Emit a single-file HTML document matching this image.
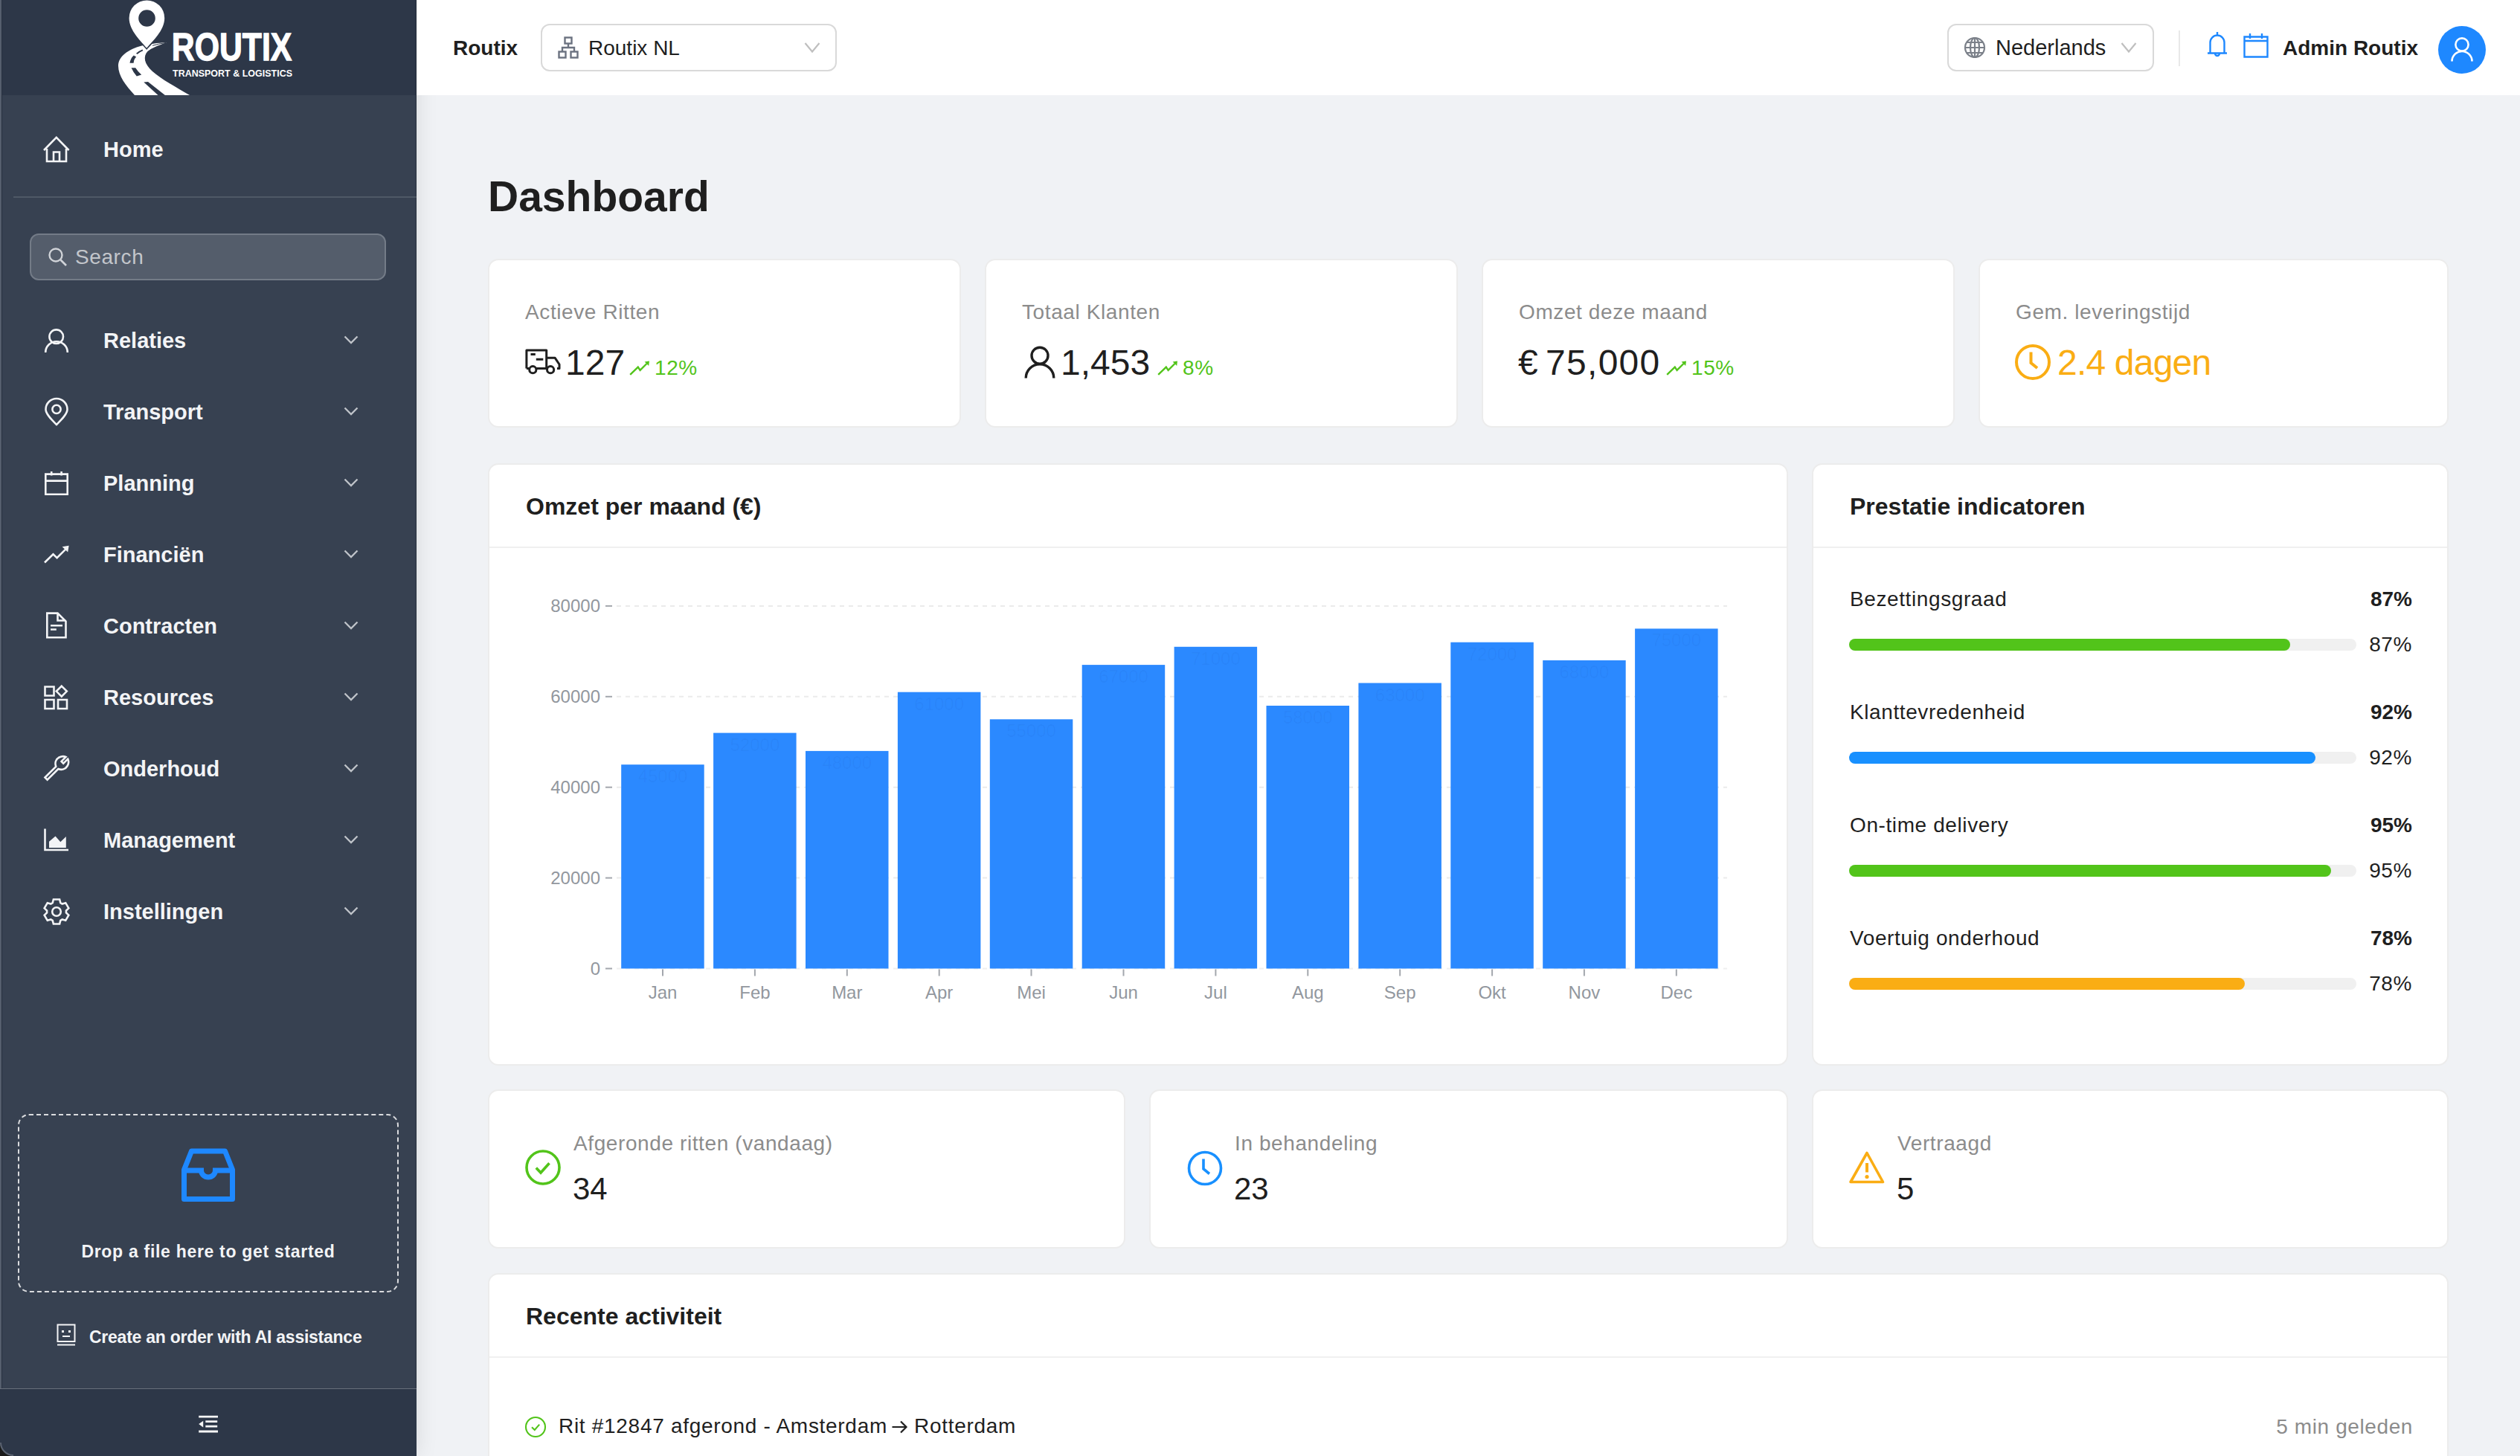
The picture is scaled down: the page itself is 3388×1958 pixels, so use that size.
<!DOCTYPE html><html><head><meta charset="utf-8"><style>
*{box-sizing:border-box;margin:0;padding:0}
html,body{width:3388px;height:1958px;overflow:hidden;background:#f0f2f5;font-family:"Liberation Sans",sans-serif;color:#1f1f1f}
.t{position:absolute;white-space:nowrap;line-height:1}
.a{position:absolute}
.card{position:absolute;background:#fff;border:2px solid #ececec;border-radius:14px}
svg{position:absolute;overflow:visible}
@media (max-width:2400px){html{zoom:0.5}}
</style></head><body>
<div class="a" style="left:560px;top:0;width:2828px;height:128px;background:#fff"></div>
<div class="a" style="left:0;top:0;width:560px;height:1958px;background:#374151;box-shadow:0 0 28px rgba(0,0,0,0.11)"></div>
<div class="a" style="left:0;top:0;width:560px;height:128px;background:#2d3748"></div>
<div class="a" style="left:559px;top:0;width:1px;height:1958px;background:rgba(15,20,30,0.35)"></div>
<div class="a" style="left:560px;top:0;width:2828px;height:128px;background:#fff"></div>
<div class="a" style="left:0;top:0;width:2px;height:1958px;background:#555e6d"></div><div class="a" style="left:2px;top:0;width:1px;height:1958px;background:#283140"></div>
<svg style="left:150px;top:0;overflow:hidden" width="260" height="128" viewBox="0 0 260 128">
<path fill="#fff" d="M40.5,61.5 C22,66.5 9,76 9,88.5 C9,102 19,115 31,128 L105,128 C88,118 66,106 55,96 C44,86 42,76 48.5,69 C54,64.5 62,61.5 74,57 C62,57.5 50,59.5 40.5,61.5 Z"/>
<path fill="#2d3748" d="M33,71.8 Q36.5,68.6 41.5,66.6 L42.2,68.2 Q37.6,70 34.5,73 Z"/>
<path fill="#2d3748" d="M24.5,84.8 Q25.5,78.5 29.8,74.6 L33.2,76.6 Q29.8,80 29.6,84.8 Z"/>
<path fill="#2d3748" d="M26.6,91.3 L32.2,91.3 Q35.5,96.5 40.2,100.6 L33.8,102.4 Q29.2,97.5 26.6,91.3 Z"/>
<path fill="#2d3748" d="M43.3,110.6 L49,110 L72.5,128.5 L63,128.5 Z"/>
<path fill="none" stroke="#2d3748" stroke-width="1" d="M55,61.3 Q63,59 73,57.4"/>
<path fill="#2d3748" stroke="#2d3748" stroke-width="3.2" d="M47.2,64.5 C40,56 23.6,41 23.6,24.2 A23.8,23.8 0 0 1 71.2,24.2 C71.2,41 54.5,56 47.2,64.5 Z"/>
<path fill="#fff" fill-rule="evenodd" d="M47.2,64.5 C40,56 23.6,41 23.6,24.2 A23.8,23.8 0 0 1 71.2,24.2 C71.2,41 54.5,56 47.2,64.5 Z M47.5,13.2 A11.3,11.3 0 1 0 47.5,35.8 A11.3,11.3 0 1 0 47.5,13.2 Z"/>
<text x="80.8" y="81.2" font-family="Liberation Sans" font-weight="700" font-size="52" fill="#fff" stroke="#fff" stroke-width="1.3" textLength="161.5" lengthAdjust="spacingAndGlyphs">ROUTIX</text>
<text x="82" y="102.7" font-family="Liberation Sans" font-weight="700" font-size="13.4" fill="#fff" textLength="161" lengthAdjust="spacingAndGlyphs">TRANSPORT &amp; LOGISTICS</text>
</svg>
<svg style="left:58px;top:183px" width="36" height="36" viewBox="0 0 36 36"><path fill="none" stroke="#f3f4f6" stroke-width="2.6" stroke-linejoin="miter" d="M1,19 L17.8,1.8 L34.6,19 M5,17 V34 H31 V17 M14,34 V21.5 H22 V34"/></svg>
<div class="t" style="left:139.0px;top:186.5px;font-size:29px;color:#f3f4f6;font-weight:700;">Home</div>
<div class="a" style="left:18px;top:264px;width:542px;height:2px;background:rgba(255,255,255,0.12)"></div>
<div class="a" style="left:40px;top:314px;width:479px;height:63px;border-radius:12px;background:#545d6b;border:2px solid #737b87"></div>
<svg style="left:64px;top:332px" width="28" height="28" viewBox="0 0 28 28"><circle cx="11" cy="11" r="8.5" fill="none" stroke="#d0d3d8" stroke-width="2.4"/><path d="M17.5,17.5 L25,25" stroke="#d0d3d8" stroke-width="2.6"/></svg>
<div class="t" style="left:101.0px;top:332.3px;font-size:28px;color:#c3c6cb;font-weight:400;letter-spacing:0.6px;">Search</div>
<svg style="left:58px;top:439px" width="36" height="36" viewBox="0 0 36 36"><circle fill="none" stroke="#f3f4f6" stroke-width="2.6" stroke-linejoin="miter" cx="17.7" cy="13.7" r="9.3"/><path fill="none" stroke="#f3f4f6" stroke-width="2.6" stroke-linejoin="miter" d="M3.2,35 A14.8,14.8 0 0 1 32.8,35"/></svg>
<div class="t" style="left:139.0px;top:443.5px;font-size:29px;color:#f3f4f6;font-weight:700;">Relaties</div>
<svg style="left:462px;top:451px" width="20" height="12" viewBox="0 0 20 12"><path fill="none" stroke="#bfc3c9" stroke-width="2.3" d="M1.5,1.5 L10,10 L18.5,1.5"/></svg>
<svg style="left:58px;top:535px" width="36" height="36" viewBox="0 0 36 36"><path fill="none" stroke="#f3f4f6" stroke-width="2.6" stroke-linejoin="miter" d="M18,36 C12,30 3.5,22 3.5,15.5 A14.5,14.5 0 0 1 32.5,15.5 C32.5,22 24,30 18,36 Z"/><circle fill="none" stroke="#f3f4f6" stroke-width="2.6" stroke-linejoin="miter" cx="18" cy="15.4" r="5.6"/></svg>
<div class="t" style="left:139.0px;top:539.5px;font-size:29px;color:#f3f4f6;font-weight:700;">Transport</div>
<svg style="left:462px;top:547px" width="20" height="12" viewBox="0 0 20 12"><path fill="none" stroke="#bfc3c9" stroke-width="2.3" d="M1.5,1.5 L10,10 L18.5,1.5"/></svg>
<svg style="left:58px;top:631px" width="36" height="36" viewBox="0 0 36 36"><path fill="none" stroke="#f3f4f6" stroke-width="2.6" stroke-linejoin="miter" d="M3.3,6.6 H32.7 V33.7 H3.3 Z M3.3,15.6 H32.7 M11.2,3 V8.5 M24.6,3 V8.5"/></svg>
<div class="t" style="left:139.0px;top:635.5px;font-size:29px;color:#f3f4f6;font-weight:700;">Planning</div>
<svg style="left:462px;top:643px" width="20" height="12" viewBox="0 0 20 12"><path fill="none" stroke="#bfc3c9" stroke-width="2.3" d="M1.5,1.5 L10,10 L18.5,1.5"/></svg>
<svg style="left:58px;top:727px" width="36" height="36" viewBox="0 0 36 36"><path fill="none" stroke="#f3f4f6" stroke-width="2.6" stroke-linejoin="miter" d="M2,29.5 L13.5,18.3 L18.6,23.1 L31,10.8"/><path fill="#f3f4f6" d="M34.6,6.8 L25.6,8.2 L33.2,15.6 Z"/></svg>
<div class="t" style="left:139.0px;top:731.5px;font-size:29px;color:#f3f4f6;font-weight:700;">Financiën</div>
<svg style="left:462px;top:739px" width="20" height="12" viewBox="0 0 20 12"><path fill="none" stroke="#bfc3c9" stroke-width="2.3" d="M1.5,1.5 L10,10 L18.5,1.5"/></svg>
<svg style="left:58px;top:823px" width="36" height="36" viewBox="0 0 36 36"><path fill="none" stroke="#f3f4f6" stroke-width="2.6" stroke-linejoin="miter" d="M5.3,1.6 H19.5 L30.5,12.6 V34.2 H5.3 Z M19.5,1.6 V11.5 H30.5 M10,18.3 H26 M10,23.5 H17.8"/></svg>
<div class="t" style="left:139.0px;top:827.5px;font-size:29px;color:#f3f4f6;font-weight:700;">Contracten</div>
<svg style="left:462px;top:835px" width="20" height="12" viewBox="0 0 20 12"><path fill="none" stroke="#bfc3c9" stroke-width="2.3" d="M1.5,1.5 L10,10 L18.5,1.5"/></svg>
<svg style="left:58px;top:919px" width="36" height="36" viewBox="0 0 36 36"><path fill="none" stroke="#f3f4f6" stroke-width="2.6" stroke-linejoin="miter" d="M2.5,4.5 H14.5 V16.5 H2.5 Z M2.5,22 H14.5 V34 H2.5 Z M20,22 H32 V34 H20 Z M24.8,3.6 L31.8,10.6 L24.8,17.6 L17.8,10.6 Z"/></svg>
<div class="t" style="left:139.0px;top:923.5px;font-size:29px;color:#f3f4f6;font-weight:700;">Resources</div>
<svg style="left:462px;top:931px" width="20" height="12" viewBox="0 0 20 12"><path fill="none" stroke="#bfc3c9" stroke-width="2.3" d="M1.5,1.5 L10,10 L18.5,1.5"/></svg>
<svg style="left:58px;top:1015px" width="36" height="36" viewBox="0 0 36 36"><path fill="none" stroke="#f3f4f6" stroke-width="2.6" stroke-linejoin="miter" d="M2.5,30.5 L17.2,15.8 C15.5,11 17,6 21.5,3.5 C24.5,2 28,1.8 30.5,3 L24.6,8.9 L27.2,11.6 L33.2,5.6 C34.6,8.5 34.4,12 32.6,15 C30.2,19.3 25,21 20.3,19 L5.6,33.7 Z"/></svg>
<div class="t" style="left:139.0px;top:1019.5px;font-size:29px;color:#f3f4f6;font-weight:700;">Onderhoud</div>
<svg style="left:462px;top:1027px" width="20" height="12" viewBox="0 0 20 12"><path fill="none" stroke="#bfc3c9" stroke-width="2.3" d="M1.5,1.5 L10,10 L18.5,1.5"/></svg>
<svg style="left:58px;top:1111px" width="36" height="36" viewBox="0 0 36 36"><path fill="none" stroke="#f3f4f6" stroke-width="2.6" d="M2.5,3.5 V32 H34"/><path fill="#f3f4f6" d="M8,29 V20.8 L16.5,13.6 L23.3,21.2 L30.8,14 V29 Z"/></svg>
<div class="t" style="left:139.0px;top:1115.5px;font-size:29px;color:#f3f4f6;font-weight:700;">Management</div>
<svg style="left:462px;top:1123px" width="20" height="12" viewBox="0 0 20 12"><path fill="none" stroke="#bfc3c9" stroke-width="2.3" d="M1.5,1.5 L10,10 L18.5,1.5"/></svg>
<svg style="left:58px;top:1207px" width="36" height="36" viewBox="0 0 36 36"><path fill="none" stroke="#f3f4f6" stroke-width="2.6" stroke-linejoin="miter" stroke-linejoin="round" d="M12.71,7.12 L13.89,2.50 L22.11,2.50 L23.29,7.12 L25.64,8.48 L30.23,7.19 L34.34,14.31 L30.93,17.64 L30.93,20.36 L34.34,23.69 L30.23,30.81 L25.64,29.52 L23.29,30.88 L22.11,35.50 L13.89,35.50 L12.71,30.88 L10.36,29.52 L5.77,30.81 L1.66,23.69 L5.07,20.36 L5.07,17.64 L1.66,14.31 L5.77,7.19 L10.36,8.48 Z"/><circle fill="none" stroke="#f3f4f6" stroke-width="2.6" stroke-linejoin="miter" cx="18" cy="19" r="5.8"/></svg>
<div class="t" style="left:139.0px;top:1211.5px;font-size:29px;color:#f3f4f6;font-weight:700;">Instellingen</div>
<svg style="left:462px;top:1219px" width="20" height="12" viewBox="0 0 20 12"><path fill="none" stroke="#bfc3c9" stroke-width="2.3" d="M1.5,1.5 L10,10 L18.5,1.5"/></svg>
<div class="a" style="left:24px;top:1498px;width:512px;height:240px;border:2.5px dashed rgba(255,255,255,0.82);border-radius:15px"></div>
<svg style="left:244px;top:1543px" width="72" height="73" viewBox="0 0 72 73">
<path fill="none" stroke="#1e88ff" stroke-width="7" stroke-linejoin="round" d="M3.5,30 L13.5,5 H58.5 L68.5,30 V69.5 H3.5 Z"/>
<path fill="none" stroke="#1e88ff" stroke-width="7" d="M3.5,31 H26.5 A9.5,9 0 0 0 45.5,31 H68.5"/>
</svg>
<div class="t" style="left:-720.0px;width:2000px;text-align:center;top:1671.5px;font-size:23px;color:#f3f4f6;font-weight:700;letter-spacing:0.7px;">Drop a file here to get started</div>
<svg style="left:76px;top:1780px" width="26" height="30" viewBox="0 0 26 30">
<path fill="none" stroke="#f3f4f6" stroke-width="2" d="M1.5,1.5 H24.5 V24 H1.5 Z M1,28.5 H25"/>
<rect x="7" y="9" width="3" height="3" fill="#f3f4f6"/><rect x="16" y="9" width="3" height="3" fill="#f3f4f6"/><path d="M8,17 H18" stroke="#f3f4f6" stroke-width="2"/>
</svg>
<div class="t" style="left:120.0px;top:1786.5px;font-size:23px;color:#f3f4f6;font-weight:700;letter-spacing:-0.25px;">Create an order with AI assistance</div>
<div class="a" style="left:0;top:1867px;width:560px;height:91px;background:#2d3748;border-top:1px solid rgba(255,255,255,0.28)"></div>
<svg style="left:266px;top:1903px" width="28" height="24" viewBox="0 0 28 24">
<path d="M1.2,2.2 H27 M10.3,8.6 H26.2 M10.3,15.2 H26.2 M1.2,22 H27" stroke="#f6f6f6" stroke-width="2.8"/><path d="M1.2,12 L7.2,7.8 V16.4 Z" fill="#f6f6f6"/>
</svg>
<div class="t" style="left:609.0px;top:50.6px;font-size:28px;color:#1f1f1f;font-weight:700;">Routix</div>
<div class="a" style="left:727px;top:32px;width:398px;height:64px;border:2px solid #d9d9d9;border-radius:12px;background:#fff"></div>
<svg style="left:750px;top:49px" width="28" height="30" viewBox="0 0 28 30">
<g fill="none" stroke="#6b7280" stroke-width="2.4"><rect x="9.5" y="1.5" width="9" height="8"/><rect x="1.5" y="20.5" width="9" height="8"/><rect x="17.5" y="20.5" width="9" height="8"/><path d="M14,9.5 V15 M6,20.5 V15 H22 V20.5"/></g>
</svg>
<div class="t" style="left:791.0px;top:50.8px;font-size:28px;color:#1f1f1f;font-weight:400;letter-spacing:0;">Routix NL</div>
<svg style="left:1081px;top:56px" width="22" height="16" viewBox="0 0 22 16"><path fill="none" stroke="#bfbfbf" stroke-width="2.2" d="M1.5,2 L11,13.5 L20.5,2"/></svg>
<div class="a" style="left:2618px;top:32px;width:278px;height:64px;border:2px solid #d9d9d9;border-radius:12px;background:#fff"></div>
<svg style="left:2640px;top:49px" width="30" height="30" viewBox="0 0 30 30">
<g fill="none" stroke="#7b8089" stroke-width="2.2"><circle cx="15" cy="15" r="13"/><ellipse cx="15" cy="15" rx="6" ry="13"/><path d="M2,15 H28 M4,8 H26 M4,22 H26 M15,2 V28"/></g>
</svg>
<div class="t" style="left:2683.0px;top:50.0px;font-size:29px;color:#1f1f1f;font-weight:400;letter-spacing:0;">Nederlands</div>
<svg style="left:2851px;top:56px" width="22" height="16" viewBox="0 0 22 16"><path fill="none" stroke="#bfbfbf" stroke-width="2.2" d="M1.5,2 L11,13.5 L20.5,2"/></svg>
<div class="a" style="left:2929px;top:41px;width:2px;height:48px;background:#e8e8e8"></div>
<svg style="left:2967px;top:42px" width="28" height="36" viewBox="0 0 28 36">
<g fill="none" stroke="#1e88ff" stroke-width="2.4"><path d="M1,29.5 H27 M4.5,29.5 V15 A9.5,9.5 0 0 1 23.5,15 V29.5 M14,1 V5.5 M11,30 A3,3 0 0 0 17,30"/></g>
</svg>
<svg style="left:3016px;top:44px" width="34" height="34" viewBox="0 0 34 34">
<g fill="none" stroke="#1e88ff" stroke-width="2.4"><path d="M1.5,5.5 H32.5 V32.5 H1.5 Z M1.5,11 H32.5 M9,1 V8 M25,1 V8"/></g>
</svg>
<div class="t" style="left:3069.0px;top:50.7px;font-size:28px;color:#1f1f1f;font-weight:700;">Admin Routix</div>
<div class="a" style="left:3278px;top:35px;width:64px;height:64px;border-radius:32px;background:#1e88ff"></div>
<svg style="left:3294px;top:49px" width="32" height="36" viewBox="0 0 32 36">
<g fill="none" stroke="#fff" stroke-width="2.6"><circle cx="16" cy="11" r="8.6"/><path d="M2.5,33.5 A13.5,13.5 0 0 1 29.5,33.5"/></g>
</svg>
<div class="t" style="left:656.0px;top:235.5px;font-size:57px;color:#1f1f1f;font-weight:700;">Dashboard</div>
<div class="card" style="left:656px;top:348px;width:636px;height:227px"></div>
<div class="card" style="left:1324px;top:348px;width:636px;height:227px"></div>
<div class="card" style="left:1992px;top:348px;width:636px;height:227px"></div>
<div class="card" style="left:2660px;top:348px;width:632px;height:227px"></div>
<div class="t" style="left:706.0px;top:406.3px;font-size:28px;color:#8c8c8c;font-weight:400;letter-spacing:0.6px;">Actieve Ritten</div>
<div class="t" style="left:1374.0px;top:406.3px;font-size:28px;color:#8c8c8c;font-weight:400;letter-spacing:0.6px;">Totaal Klanten</div>
<div class="t" style="left:2042.0px;top:406.3px;font-size:28px;color:#8c8c8c;font-weight:400;letter-spacing:0.6px;">Omzet deze maand</div>
<div class="t" style="left:2710.0px;top:406.3px;font-size:28px;color:#8c8c8c;font-weight:400;letter-spacing:0.6px;">Gem. leveringstijd</div>
<svg style="left:706px;top:469px" width="48" height="36" viewBox="0 0 48 36">
<g fill="none" stroke="#1f1f1f" stroke-width="3" stroke-linejoin="round"><path d="M1.9,26.5 V1.9 H28.7 V26.5 M28.7,12.3 H40.2 L46,21 V26.5 H43 M15,26.5 H29.5 M1.9,26.5 H5"/><circle cx="10.3" cy="28.2" r="4.6"/><circle cx="34.1" cy="28.2" r="4.6"/><path d="M7.5,7.6 H13.8 M14.8,14.2 H24.3"/></g>
</svg>
<div class="t" style="left:760.0px;top:464.4px;font-size:48px;color:#1f1f1f;font-weight:400;">127</div>
<svg style="left:846px;top:484px" width="28" height="22" viewBox="0 0 28 22"><g fill="none" stroke="#52c41a" stroke-width="2.4"><path d="M1.2,19.9 L11.8,9.6 L14.6,13.8 L23.5,5"/></g><path fill="#52c41a" d="M27,1.4 L20.6,2.4 L26.2,8 Z"/></svg><div class="t" style="left:880.0px;top:480.8px;font-size:28px;color:#52c41a;font-weight:400;letter-spacing:0.6px;">12%</div>
<svg style="left:1376px;top:465px" width="44" height="44" viewBox="0 0 44 44">
<g fill="none" stroke="#1f1f1f" stroke-width="3.4"><circle cx="22" cy="13.2" r="11"/><path d="M3.2,43.5 A18.8,18.8 0 0 1 40.8,43.5"/></g>
</svg>
<div class="t" style="left:1426.0px;top:464.4px;font-size:48px;color:#1f1f1f;font-weight:400;">1,453</div>
<svg style="left:1556px;top:484px" width="28" height="22" viewBox="0 0 28 22"><g fill="none" stroke="#52c41a" stroke-width="2.4"><path d="M1.2,19.9 L11.8,9.6 L14.6,13.8 L23.5,5"/></g><path fill="#52c41a" d="M27,1.4 L20.6,2.4 L26.2,8 Z"/></svg><div class="t" style="left:1590.0px;top:480.8px;font-size:28px;color:#52c41a;font-weight:400;letter-spacing:0.6px;">8%</div>
<div class="t" style="left:2041.0px;top:464.4px;font-size:48px;color:#1f1f1f;font-weight:400;">€</div>
<div class="t" style="left:2078.0px;top:464.4px;font-size:48px;color:#1f1f1f;font-weight:400;letter-spacing:1.3px;">75,000</div>
<svg style="left:2240px;top:484px" width="28" height="22" viewBox="0 0 28 22"><g fill="none" stroke="#52c41a" stroke-width="2.4"><path d="M1.2,19.9 L11.8,9.6 L14.6,13.8 L23.5,5"/></g><path fill="#52c41a" d="M27,1.4 L20.6,2.4 L26.2,8 Z"/></svg><div class="t" style="left:2274.0px;top:480.8px;font-size:28px;color:#52c41a;font-weight:400;letter-spacing:0.6px;">15%</div>
<svg style="left:2708px;top:462px" width="50" height="50" viewBox="0 0 50 50">
<g fill="none" stroke="#faad14" stroke-width="4"><circle cx="25" cy="25" r="22"/><path d="M22.5,11.5 V26 L31,33"/></g>
</svg>
<div class="t" style="left:2766.0px;top:464.4px;font-size:48px;color:#faad14;font-weight:400;letter-spacing:-0.8px;">2.4 dagen</div>
<div class="card" style="left:656px;top:623px;width:1748px;height:810px"></div>
<div class="a" style="left:658px;top:735px;width:1744px;height:2px;background:#f0f0f0"></div>
<div class="t" style="left:707.0px;top:664.9px;font-size:32px;color:#1f1f1f;font-weight:700;">Omzet per maand (€)</div>
<svg style="left:0;top:0" width="3388" height="1958" viewBox="0 0 3388 1958"><path d="M814,1302.5 H823" stroke="#a3a7ad" stroke-width="2"/><text x="807" y="1311.0" text-anchor="end" font-family="Liberation Sans" font-size="24" fill="#92979e">0</text><path d="M829,1180.6 H2322" stroke="#ebebeb" stroke-width="2" stroke-dasharray="6 6"/><path d="M814,1180.6 H823" stroke="#a3a7ad" stroke-width="2"/><text x="807" y="1189.1" text-anchor="end" font-family="Liberation Sans" font-size="24" fill="#92979e">20000</text><path d="M829,1058.7 H2322" stroke="#ebebeb" stroke-width="2" stroke-dasharray="6 6"/><path d="M814,1058.7 H823" stroke="#a3a7ad" stroke-width="2"/><text x="807" y="1067.2" text-anchor="end" font-family="Liberation Sans" font-size="24" fill="#92979e">40000</text><path d="M829,936.8 H2322" stroke="#ebebeb" stroke-width="2" stroke-dasharray="6 6"/><path d="M814,936.8 H823" stroke="#a3a7ad" stroke-width="2"/><text x="807" y="945.3" text-anchor="end" font-family="Liberation Sans" font-size="24" fill="#92979e">60000</text><path d="M829,814.9 H2322" stroke="#ebebeb" stroke-width="2" stroke-dasharray="6 6"/><path d="M814,814.9 H823" stroke="#a3a7ad" stroke-width="2"/><text x="807" y="823.4" text-anchor="end" font-family="Liberation Sans" font-size="24" fill="#92979e">80000</text><path d="M829,1302.5 H2322" stroke="#f0f0f0" stroke-width="2" stroke-dasharray="6 6"/><rect x="835.2" y="1028.2" width="111.5" height="274.3" fill="#2b89ff"/><text x="891.0" y="1052.2" text-anchor="middle" font-family="Liberation Sans" font-size="24" fill="rgba(0,0,80,0.035)">45000</text><path d="M891.0,1303.5 V1312.5" stroke="#a3a7ad" stroke-width="2"/><text x="891.0" y="1342.5" text-anchor="middle" font-family="Liberation Sans" font-size="24" fill="#92979e">Jan</text><rect x="959.1" y="985.6" width="111.5" height="316.9" fill="#2b89ff"/><text x="1014.9" y="1009.6" text-anchor="middle" font-family="Liberation Sans" font-size="24" fill="rgba(0,0,80,0.035)">52000</text><path d="M1014.9,1303.5 V1312.5" stroke="#a3a7ad" stroke-width="2"/><text x="1014.9" y="1342.5" text-anchor="middle" font-family="Liberation Sans" font-size="24" fill="#92979e">Feb</text><rect x="1083.0" y="1009.9" width="111.5" height="292.6" fill="#2b89ff"/><text x="1138.8" y="1033.9" text-anchor="middle" font-family="Liberation Sans" font-size="24" fill="rgba(0,0,80,0.035)">48000</text><path d="M1138.8,1303.5 V1312.5" stroke="#a3a7ad" stroke-width="2"/><text x="1138.8" y="1342.5" text-anchor="middle" font-family="Liberation Sans" font-size="24" fill="#92979e">Mar</text><rect x="1206.9" y="930.7" width="111.5" height="371.8" fill="#2b89ff"/><text x="1262.7" y="954.7" text-anchor="middle" font-family="Liberation Sans" font-size="24" fill="rgba(0,0,80,0.035)">61000</text><path d="M1262.7,1303.5 V1312.5" stroke="#a3a7ad" stroke-width="2"/><text x="1262.7" y="1342.5" text-anchor="middle" font-family="Liberation Sans" font-size="24" fill="#92979e">Apr</text><rect x="1330.8" y="967.3" width="111.5" height="335.2" fill="#2b89ff"/><text x="1386.5" y="991.3" text-anchor="middle" font-family="Liberation Sans" font-size="24" fill="rgba(0,0,80,0.035)">55000</text><path d="M1386.5,1303.5 V1312.5" stroke="#a3a7ad" stroke-width="2"/><text x="1386.5" y="1342.5" text-anchor="middle" font-family="Liberation Sans" font-size="24" fill="#92979e">Mei</text><rect x="1454.7" y="894.1" width="111.5" height="408.4" fill="#2b89ff"/><text x="1510.5" y="918.1" text-anchor="middle" font-family="Liberation Sans" font-size="24" fill="rgba(0,0,80,0.035)">67000</text><path d="M1510.5,1303.5 V1312.5" stroke="#a3a7ad" stroke-width="2"/><text x="1510.5" y="1342.5" text-anchor="middle" font-family="Liberation Sans" font-size="24" fill="#92979e">Jun</text><rect x="1578.6" y="869.8" width="111.5" height="432.7" fill="#2b89ff"/><text x="1634.4" y="893.8" text-anchor="middle" font-family="Liberation Sans" font-size="24" fill="rgba(0,0,80,0.035)">71000</text><path d="M1634.4,1303.5 V1312.5" stroke="#a3a7ad" stroke-width="2"/><text x="1634.4" y="1342.5" text-anchor="middle" font-family="Liberation Sans" font-size="24" fill="#92979e">Jul</text><rect x="1702.5" y="949.0" width="111.5" height="353.5" fill="#2b89ff"/><text x="1758.3" y="973.0" text-anchor="middle" font-family="Liberation Sans" font-size="24" fill="rgba(0,0,80,0.035)">58000</text><path d="M1758.3,1303.5 V1312.5" stroke="#a3a7ad" stroke-width="2"/><text x="1758.3" y="1342.5" text-anchor="middle" font-family="Liberation Sans" font-size="24" fill="#92979e">Aug</text><rect x="1826.4" y="918.5" width="111.5" height="384.0" fill="#2b89ff"/><text x="1882.2" y="942.5" text-anchor="middle" font-family="Liberation Sans" font-size="24" fill="rgba(0,0,80,0.035)">63000</text><path d="M1882.2,1303.5 V1312.5" stroke="#a3a7ad" stroke-width="2"/><text x="1882.2" y="1342.5" text-anchor="middle" font-family="Liberation Sans" font-size="24" fill="#92979e">Sep</text><rect x="1950.3" y="863.7" width="111.5" height="438.8" fill="#2b89ff"/><text x="2006.1" y="887.7" text-anchor="middle" font-family="Liberation Sans" font-size="24" fill="rgba(0,0,80,0.035)">72000</text><path d="M2006.1,1303.5 V1312.5" stroke="#a3a7ad" stroke-width="2"/><text x="2006.1" y="1342.5" text-anchor="middle" font-family="Liberation Sans" font-size="24" fill="#92979e">Okt</text><rect x="2074.2" y="888.0" width="111.5" height="414.5" fill="#2b89ff"/><text x="2129.9" y="912.0" text-anchor="middle" font-family="Liberation Sans" font-size="24" fill="rgba(0,0,80,0.035)">68000</text><path d="M2129.9,1303.5 V1312.5" stroke="#a3a7ad" stroke-width="2"/><text x="2129.9" y="1342.5" text-anchor="middle" font-family="Liberation Sans" font-size="24" fill="#92979e">Nov</text><rect x="2198.1" y="845.4" width="111.5" height="457.1" fill="#2b89ff"/><text x="2253.8" y="869.4" text-anchor="middle" font-family="Liberation Sans" font-size="24" fill="rgba(0,0,80,0.035)">75000</text><path d="M2253.8,1303.5 V1312.5" stroke="#a3a7ad" stroke-width="2"/><text x="2253.8" y="1342.5" text-anchor="middle" font-family="Liberation Sans" font-size="24" fill="#92979e">Dec</text></svg>
<div class="card" style="left:2436px;top:623px;width:856px;height:810px"></div>
<div class="a" style="left:2438px;top:735px;width:852px;height:2px;background:#f0f0f0"></div>
<div class="t" style="left:2487.0px;top:664.9px;font-size:32px;color:#1f1f1f;font-weight:700;">Prestatie indicatoren</div>
<div class="t" style="left:2487.0px;top:791.8px;font-size:28px;color:#1f1f1f;font-weight:400;letter-spacing:0.6px;">Bezettingsgraad</div>
<div class="t" style="right:145.0px;top:791.8px;font-size:28px;color:#1f1f1f;font-weight:700;">87%</div>
<div class="a" style="left:2486px;top:859px;width:682px;height:16px;border-radius:8px;background:#f0f0f0"></div>
<div class="a" style="left:2486px;top:859px;width:593.3px;height:16px;border-radius:8px;background:#52c41a"></div>
<div class="t" style="right:145.0px;top:853.3px;font-size:28px;color:#1f1f1f;font-weight:400;letter-spacing:0.6px;">87%</div>
<div class="t" style="left:2487.0px;top:943.8px;font-size:28px;color:#1f1f1f;font-weight:400;letter-spacing:0.6px;">Klanttevredenheid</div>
<div class="t" style="right:145.0px;top:943.8px;font-size:28px;color:#1f1f1f;font-weight:700;">92%</div>
<div class="a" style="left:2486px;top:1011px;width:682px;height:16px;border-radius:8px;background:#f0f0f0"></div>
<div class="a" style="left:2486px;top:1011px;width:627.4px;height:16px;border-radius:8px;background:#1890ff"></div>
<div class="t" style="right:145.0px;top:1005.3px;font-size:28px;color:#1f1f1f;font-weight:400;letter-spacing:0.6px;">92%</div>
<div class="t" style="left:2487.0px;top:1095.8px;font-size:28px;color:#1f1f1f;font-weight:400;letter-spacing:0.6px;">On-time delivery</div>
<div class="t" style="right:145.0px;top:1095.8px;font-size:28px;color:#1f1f1f;font-weight:700;">95%</div>
<div class="a" style="left:2486px;top:1163px;width:682px;height:16px;border-radius:8px;background:#f0f0f0"></div>
<div class="a" style="left:2486px;top:1163px;width:647.9px;height:16px;border-radius:8px;background:#52c41a"></div>
<div class="t" style="right:145.0px;top:1157.3px;font-size:28px;color:#1f1f1f;font-weight:400;letter-spacing:0.6px;">95%</div>
<div class="t" style="left:2487.0px;top:1247.8px;font-size:28px;color:#1f1f1f;font-weight:400;letter-spacing:0.6px;">Voertuig onderhoud</div>
<div class="t" style="right:145.0px;top:1247.8px;font-size:28px;color:#1f1f1f;font-weight:700;">78%</div>
<div class="a" style="left:2486px;top:1315px;width:682px;height:16px;border-radius:8px;background:#f0f0f0"></div>
<div class="a" style="left:2486px;top:1315px;width:532.0px;height:16px;border-radius:8px;background:#faad14"></div>
<div class="t" style="right:145.0px;top:1309.3px;font-size:28px;color:#1f1f1f;font-weight:400;letter-spacing:0.6px;">78%</div>
<div class="card" style="left:656px;top:1465px;width:857px;height:214px"></div>
<div class="card" style="left:1545px;top:1465px;width:859px;height:214px"></div>
<div class="card" style="left:2436px;top:1465px;width:856px;height:214px"></div>
<div class="t" style="left:771.0px;top:1524.3px;font-size:28px;color:#8c8c8c;font-weight:400;letter-spacing:0.6px;">Afgeronde ritten (vandaag)</div>
<div class="t" style="left:770.0px;top:1577.9px;font-size:42px;color:#1f1f1f;font-weight:400;">34</div>
<div class="t" style="left:1660.0px;top:1524.3px;font-size:28px;color:#8c8c8c;font-weight:400;letter-spacing:0.6px;">In behandeling</div>
<div class="t" style="left:1659.0px;top:1577.9px;font-size:42px;color:#1f1f1f;font-weight:400;">23</div>
<div class="t" style="left:2551.0px;top:1524.3px;font-size:28px;color:#8c8c8c;font-weight:400;letter-spacing:0.6px;">Vertraagd</div>
<div class="t" style="left:2550.0px;top:1577.9px;font-size:42px;color:#1f1f1f;font-weight:400;">5</div>
<svg style="left:706px;top:1546px" width="48" height="48" viewBox="0 0 48 48"><g fill="none" stroke="#52c41a" stroke-width="3.6"><circle cx="24" cy="24" r="22"/><path d="M14.8,24.5 L21,31 L32.5,18.2"/></g></svg>
<svg style="left:1596px;top:1547px" width="48" height="48" viewBox="0 0 48 48"><g fill="none" stroke="#1890ff" stroke-width="3.6"><circle cx="24" cy="24" r="21.5"/><path d="M22,11.5 V25 L30,31.5"/></g></svg>
<svg style="left:2484px;top:1546px" width="50" height="48" viewBox="0 0 50 48"><g fill="none" stroke="#faad14" stroke-width="3.6" stroke-linejoin="round"><path d="M26,4.5 L47.5,43.5 H4 Z"/><path d="M26,18 V30.5" stroke-width="4"/></g><circle cx="26" cy="36.5" r="2.6" fill="#faad14"/></svg>
<div class="card" style="left:656px;top:1712px;width:2636px;height:400px"></div>
<div class="a" style="left:658px;top:1824px;width:2632px;height:2px;background:#f0f0f0"></div>
<div class="t" style="left:707.0px;top:1754.4px;font-size:32px;color:#1f1f1f;font-weight:700;">Recente activiteit</div>
<svg style="left:705px;top:1904px" width="30" height="30" viewBox="0 0 30 30"><g fill="none" stroke="#52c41a" stroke-width="2.1"><circle cx="15" cy="15" r="13"/><path d="M10,15.2 L13.8,19 L20.2,11.6"/></g></svg>
<div class="t" style="left:751.0px;top:1904.3px;font-size:28px;color:#1f1f1f;font-weight:400;letter-spacing:0.7px;">Rit #12847 afgerond - Amsterdam</div>
<svg style="left:1198px;top:1908px" width="24" height="22" viewBox="0 0 24 22"><path d="M1.5,11 H20.5 M13,3.5 L20.5,11 L13,18.5" fill="none" stroke="#1f1f1f" stroke-width="2.2"/></svg>
<div class="t" style="left:1229.0px;top:1904.3px;font-size:28px;color:#1f1f1f;font-weight:400;letter-spacing:0.7px;">Rotterdam</div>
<div class="t" style="right:144.0px;top:1905.3px;font-size:28px;color:#8c8c8c;font-weight:400;letter-spacing:0.6px;">5 min geleden</div>
<svg style="left:0;top:1930px" width="30" height="28" viewBox="0 0 30 28"><path d="M0,10 A18,18 0 0 0 18,28 H0 Z" fill="#1a1a1a"/><path d="M1,10 A17,17 0 0 0 18,27" fill="none" stroke="#5a6270" stroke-width="2"/></svg>
</body></html>
